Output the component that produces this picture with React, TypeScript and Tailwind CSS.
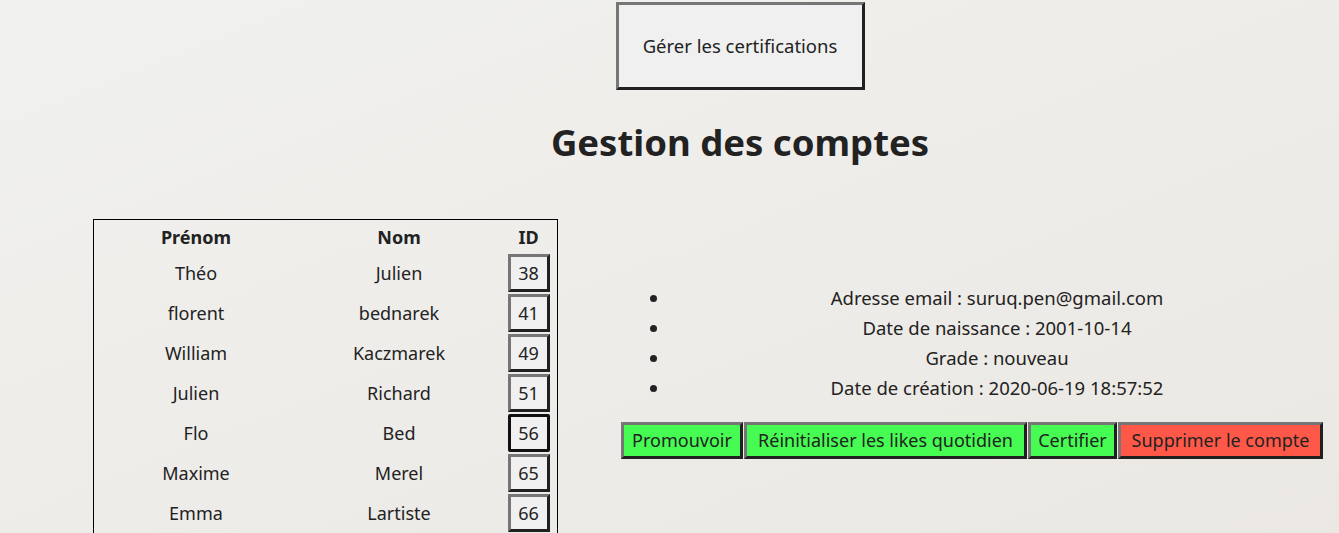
const rows = [
  { prenom: "Théo", nom: "Julien", id: 38 },
  { prenom: "florent", nom: "bednarek", id: 41 },
  { prenom: "William", nom: "Kaczmarek", id: 49 },
  { prenom: "Julien", nom: "Richard", id: 51 },
  { prenom: "Flo", nom: "Bed", id: 56 },
  { prenom: "Maxime", nom: "Merel", id: 65 },
  { prenom: "Emma", nom: "Lartiste", id: 66 },
];

const infos = [
  "Adresse email : suruq.pen@gmail.com",
  "Date de naissance : 2001-10-14",
  "Grade : nouveau",
  "Date de création : 2020-06-19 18:57:52",
];

const outset =
  "border-[3px] border-solid border-t-[#767676] border-l-[#767676] border-b-[#202020] border-r-[#202020]";

export default function App() {
  return (
    <div
      className="min-h-screen w-full overflow-hidden bg-gradient-to-br from-[#f1f1ef] to-[#ebe8e3] text-[18px] text-[#222]"
      style={{ fontFamily: '"Noto Sans", "Open Sans", sans-serif' }}
    >
      {/* Header */}
      <div className="flex flex-col items-center pl-[141px]">
        <button
          className={`mt-[2px] h-[88px] w-[249px] bg-[#f0f0f0] text-[18.5px] text-[#222] ${outset}`}
        >
          Gérer les certifications
        </button>
        <h1 className="mt-[28px] text-[36.5px] font-bold leading-[48px] text-[#222]">
          Gestion des comptes
        </h1>
      </div>

      {/* Content */}
      <div className="mt-[53px] flex items-start pl-[93px]">
        <table className="w-[465px] border border-black border-separate border-spacing-[2px] text-center">
          <thead>
            <tr className="h-[30px]">
              <th className="w-[200px] font-bold">Prénom</th>
              <th className="w-[202px] font-bold">Nom</th>
              <th className="font-bold">ID</th>
            </tr>
          </thead>
          <tbody>
            {rows.map((r) => (
              <tr key={r.id} className="h-[38px]">
                <td>{r.prenom}</td>
                <td>{r.nom}</td>
                <td className="p-0">
                  <button
                    className={`h-[38px] w-[42px] bg-[#f0f0f0] text-[18px] text-[#222] ${
                      r.id === 56
                        ? "rounded-[2px] border-[3px] border-solid border-[#111]"
                        : outset
                    }`}
                  >
                    {r.id}
                  </button>
                </td>
              </tr>
            ))}
          </tbody>
        </table>

        <div className="ml-[63px] mt-[64px] w-[703px]">
          <ul className="mb-[19px] list-disc pl-[49px] text-center text-[18.5px]">
            {infos.map((t) => (
              <li key={t} className="leading-[30px]">
                {t}
              </li>
            ))}
          </ul>
          <div className="flex gap-[1px]">
            <button className={`h-[37px] w-[122px] bg-[#46fb52] text-[18px] text-[#222] ${outset}`}>
              Promouvoir
            </button>
            <button className={`h-[37px] w-[283px] bg-[#46fb52] text-[18px] text-[#222] ${outset}`}>
              Réinitialiser les likes quotidien
            </button>
            <button className={`h-[37px] w-[89px] bg-[#46fb52] text-[18px] text-[#222] ${outset}`}>
              Certifier
            </button>
            <button className={`h-[37px] w-[205px] bg-[#ff5848] text-[18px] text-[#222] ${outset}`}>
              Supprimer le compte
            </button>
          </div>
        </div>
      </div>
    </div>
  );
}
